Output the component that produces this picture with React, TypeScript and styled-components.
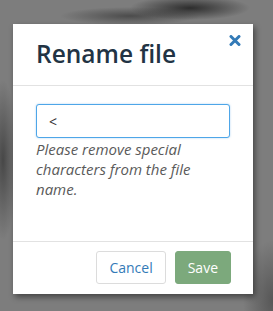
import { useState } from 'react'
import styled, { createGlobalStyle } from 'styled-components'

const GlobalStyle = createGlobalStyle`
  html, body {
    margin: 0;
    padding: 0;
  }
  body {
    font-family: 'Open Sans', 'Liberation Sans', sans-serif;
  }
`

export default function App() {
  const [name, setName] = useState('<')
  const hasSpecial = /[<>:"/\\|?*]/.test(name)

  return (
    <Backdrop>
      <GlobalStyle />
      <Dialog>
        <Header>
          <Title>Rename file</Title>
          <CloseButton aria-label="Close">
            <svg width="12" height="11" viewBox="0 0 12 11">
              <path
                d="M2 1.5 L10 9.5 M10 1.5 L2 9.5"
                stroke="#337ab7"
                strokeWidth="3"
                strokeLinecap="round"
              />
            </svg>
          </CloseButton>
        </Header>
        <Body>
          <Input value={name} onChange={e => setName(e.target.value)} />
          {hasSpecial && (
            <HelpText>Please remove special characters from the file name.</HelpText>
          )}
        </Body>
        <Footer>
          <Button>Cancel</Button>
          <Button $primary>Save</Button>
        </Footer>
      </Dialog>
    </Backdrop>
  )
}

const Backdrop = styled.div`
  width: 273px;
  height: 311px;
  box-sizing: border-box;
  padding: 24px 0 0 13px;
  overflow: hidden;
  background:
    radial-gradient(ellipse 60px 12px at 190px 8px, rgba(25, 25, 25, 0.8), transparent),
    radial-gradient(ellipse 70px 9px at 130px 16px, rgba(35, 35, 35, 0.55), transparent),
    radial-gradient(ellipse 14px 80px at 3px 160px, rgba(35, 35, 35, 0.6), transparent),
    radial-gradient(ellipse 30px 60px at 273px 300px, rgba(40, 40, 40, 0.45), transparent),
    #7d7d7d;
`

const Dialog = styled.div`
  width: 240px;
  height: 270px;
  background: #fff;
  display: flex;
  flex-direction: column;
  box-shadow: 2px 3px 6px rgba(0, 0, 0, 0.45);
`

const Header = styled.div`
  position: relative;
  height: 62px;
  padding: 17px 23px 0;
  box-sizing: border-box;
  border-bottom: 1px solid #e2e2e2;
`

const Title = styled.h4`
  margin: 0;
  font-size: 24.5px;
  line-height: 26px;
  font-weight: 600;
  color: #223344;
`

const CloseButton = styled.button`
  position: absolute;
  top: 11px;
  right: 12px;
  padding: 0;
  border: none;
  background: none;
  cursor: pointer;
  display: flex;
`

const Body = styled.div`
  flex: 1;
  padding: 18px 23px;
`

const Input = styled.input`
  display: block;
  width: 100%;
  height: 34px;
  box-sizing: border-box;
  padding: 0 12px;
  border: 1px solid #4ea6e8;
  border-radius: 3px;
  font-family: inherit;
  font-size: 14px;
  color: #333;
  outline: none;
  box-shadow: 0 0 2px rgba(102, 175, 233, 0.6);
`

const HelpText = styled.p`
  margin: 1px 0 0;
  font-size: 15px;
  line-height: 20px;
  font-style: italic;
  color: #5a5a5a;
`

const Footer = styled.div`
  display: flex;
  justify-content: flex-end;
  gap: 9px;
  padding: 9px 22px 10px;
  border-top: 1px solid #e2e2e2;
`

const Button = styled.button<{ $primary?: boolean }>`
  height: 33px;
  padding: 0 12px;
  border-radius: 3px;
  font-family: inherit;
  font-size: 14px;
  cursor: pointer;
  border: 1px solid ${p => (p.$primary ? '#7ca97c' : '#dcdcdc')};
  background: ${p => (p.$primary ? '#7ca97c' : '#fff')};
  color: ${p => (p.$primary ? '#fff' : '#337ab7')};
`
